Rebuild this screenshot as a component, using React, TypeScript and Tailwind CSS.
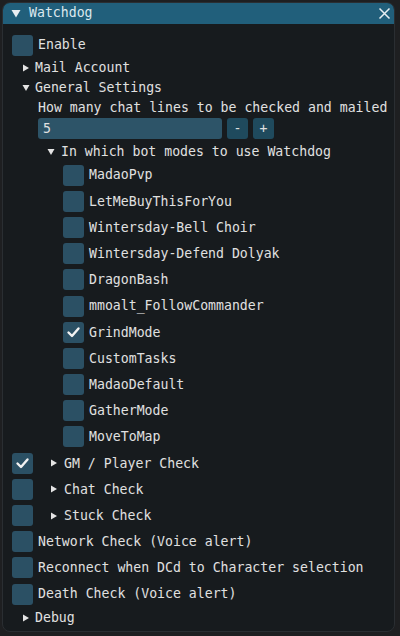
import { ReactNode } from "react";

const mono = { fontFamily: '"DejaVu Sans Mono", "Liberation Mono", monospace' };

const ArrowRight = () => (
    <svg width="8" height="8" viewBox="0 0 8 8" className="shrink-0">
        <path d="M1 0.5 L7 4 L1 7.5 Z" fill="#e4e4e4" />
    </svg>
);

const ArrowDown = () => (
    <svg width="8" height="8" viewBox="0 0 8 8" className="shrink-0">
        <path d="M0.5 1 L7.5 1 L4 7 Z" fill="#e4e4e4" />
    </svg>
);

const Check = ({ checked }: { checked?: boolean }) => (
    <div className="w-[21px] h-[21px] rounded-[3px] bg-[#2b5064] flex items-center justify-center shrink-0">
        {checked && (
            <svg width="15" height="15" viewBox="0 0 15 15">
                <path d="M2.5 7.5 L6 11 L12.5 3.5" stroke="#f2f2f2" strokeWidth="2.4" fill="none" strokeLinecap="round" strokeLinejoin="round" />
            </svg>
        )}
    </div>
);

const Row = ({ children, className = "" }: { children: ReactNode; className?: string }) => (
    <div className={`h-[26.2px] flex items-center ${className}`}>{children}</div>
);

const botModes = [
    { name: "MadaoPvp" },
    { name: "LetMeBuyThisForYou" },
    { name: "Wintersday-Bell Choir" },
    { name: "Wintersday-Defend Dolyak" },
    { name: "DragonBash" },
    { name: "mmoalt_FollowCommander" },
    { name: "GrindMode", checked: true },
    { name: "CustomTasks" },
    { name: "MadaoDefault" },
    { name: "GatherMode" },
    { name: "MoveToMap" },
];

const App = () => {
    return (
        <div className="w-[400px] h-[636px] bg-[#1e1f21] pl-[2px] pt-[2px]" style={mono}>
            <div className="w-[393px] h-[630px] bg-[#171b1e] rounded-[8px] border border-[#2a2e32] overflow-hidden text-[13.2px] text-[#e0e0e0] leading-none">
                {/* title bar */}
                <div className="h-[22px] -mt-px -mx-px bg-[#215f7b] flex items-center pl-[9px] pr-[4px]">
                    <svg width="10" height="9" viewBox="0 0 10 9" className="shrink-0">
                        <path d="M0.5 1 L9.5 1 L5 8.5 Z" fill="#e8eef2" />
                    </svg>
                    <span className="ml-[8px] text-[#dce8ee]">Watchdog</span>
                    <svg width="13" height="13" viewBox="0 0 13 13" className="ml-auto">
                        <path d="M1.5 1.5 L11.5 11.5 M11.5 1.5 L1.5 11.5" stroke="#e8eef2" strokeWidth="1.5" />
                    </svg>
                </div>

                <div className="pt-[8px] pl-[9px]">
                    <div className="h-[26px] flex items-center">
                        <Check />
                        <span className="ml-[5px]">Enable</span>
                    </div>
                    <div className="h-[20px] flex items-center pl-[10px]">
                        <ArrowRight />
                        <span className="ml-[5px]">Mail Account</span>
                    </div>
                    <div className="h-[20px] flex items-center pl-[10px]">
                        <ArrowDown />
                        <span className="ml-[5px]">General Settings</span>
                    </div>
                    <div className="h-[19px] flex items-center pl-[26px]">
                        How many chat lines to be checked and mailed
                    </div>
                    <div className="h-[25px] pt-[1px] pl-[26px] flex gap-[5px]">
                        <div className="w-[184px] h-[21px] rounded-[3px] bg-[#2d5468] flex items-center pl-[5px]">5</div>
                        <div className="w-[21px] h-[21px] rounded-[3px] bg-[#1f4a5d] flex items-center justify-center">-</div>
                        <div className="w-[21px] h-[21px] rounded-[3px] bg-[#1f4a5d] flex items-center justify-center">+</div>
                    </div>
                    <div className="h-[20px] flex items-center pl-[35px]">
                        <ArrowDown />
                        <span className="ml-[6px]">In which bot modes to use Watchdog</span>
                    </div>
                    {botModes.map((m) => (
                        <Row key={m.name} className="pl-[51px]">
                            <Check checked={m.checked} />
                            <span className="ml-[5px]">{m.name}</span>
                        </Row>
                    ))}
                    {[
                        { name: "GM / Player Check", checked: true },
                        { name: "Chat Check" },
                        { name: "Stuck Check" },
                    ].map((m) => (
                        <Row key={m.name}>
                            <Check checked={m.checked} />
                            <span className="ml-[17px]"><ArrowRight /></span>
                            <span className="ml-[6px]">{m.name}</span>
                        </Row>
                    ))}
                    {["Network Check (Voice alert)", "Reconnect when DCd to Character selection", "Death Check (Voice alert)"].map((t) => (
                        <Row key={t}>
                            <Check />
                            <span className="ml-[5px]">{t}</span>
                        </Row>
                    ))}
                    <div className="h-[21px] flex items-center pl-[10px]">
                        <ArrowRight />
                        <span className="ml-[5px]">Debug</span>
                    </div>
                </div>
            </div>
        </div>
    );
};

export default App;
